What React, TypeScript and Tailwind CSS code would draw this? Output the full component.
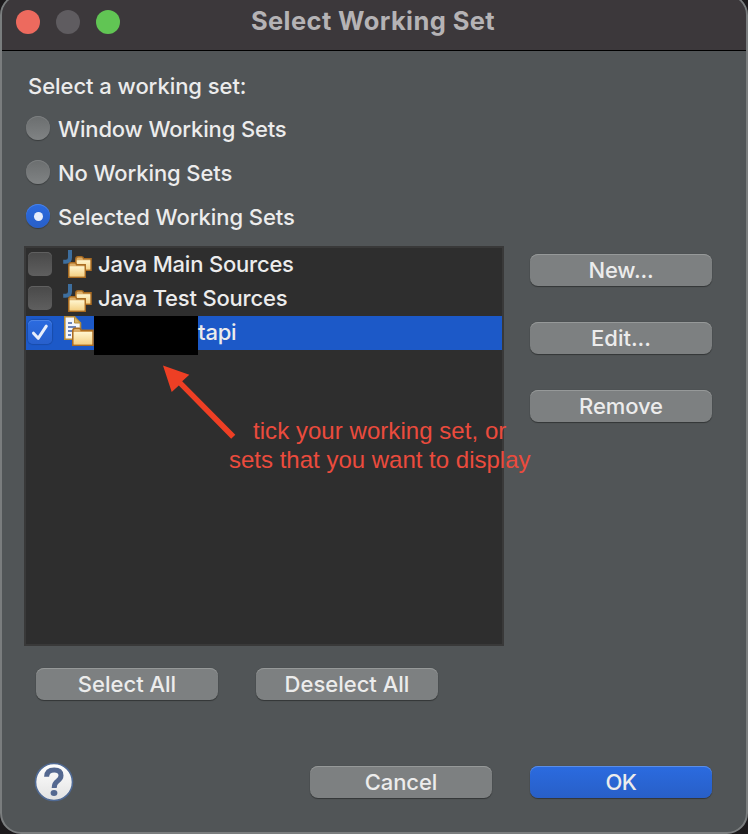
import React from "react";

const text = "font-['Inter',sans-serif] text-[22px] leading-[32px] font-[450] whitespace-nowrap text-[#ececec]";

function PushButton({ label, tracking, primary = false }: { label: string; tracking: string; primary?: boolean }) {
  return (
    <button
      className={`flex h-8 w-[182px] shrink-0 items-center justify-center rounded-[8px] ${text} ${tracking} ${
        primary
          ? "bg-linear-to-b from-[#2b6be0] to-[#285fc7] shadow-[inset_0_1px_0_#5a8ee8,0_1px_1px_rgba(0,0,0,0.35),0_0_1px_rgba(0,0,0,0.3)]"
          : "bg-[#7d8081] shadow-[inset_0_1px_0_#969999,0_1px_1px_rgba(0,0,0,0.35),0_0_1px_rgba(0,0,0,0.3)]"
      }`}
    >
      {label}
    </button>
  );
}

function Radio({ label, tracking, checked = false }: { label: string; tracking: string; checked?: boolean }) {
  return (
    <div className="flex h-11 items-center">
      <span
        className={`flex size-6 shrink-0 items-center justify-center rounded-full ${
          checked
            ? "bg-linear-to-b from-[#2b6be0] to-[#285fc7] shadow-[inset_0_1px_0_#4b82e4,0_1px_1px_rgba(0,0,0,0.3)]"
            : "bg-linear-to-b from-[#6b6e6f] to-[#808384] shadow-[inset_0_1px_0_#7c7f80,0_1px_1px_rgba(0,0,0,0.3)]"
        }`}
      >
        {checked && <span className="size-[9px] rounded-full bg-[#e6edfb]" />}
      </span>
      <span className={`ml-2 pt-[2px] ${text} ${tracking}`}>{label}</span>
    </div>
  );
}

function Checkbox({ checked = false }: { checked?: boolean }) {
  return (
    <span
      className={`ml-[2px] flex size-6 shrink-0 items-center justify-center rounded-[5px] ${
        checked
          ? "bg-linear-to-b from-[#2b6be0] to-[#2860cc] shadow-[inset_0_1px_0_#4b82e4,0_0_1px_1px_rgba(0,0,0,0.15)]"
          : "bg-linear-to-b from-[#494949] to-[#5f5f5f] shadow-[inset_0_1px_0_#606060]"
      }`}
    >
      {checked && (
        <svg width="24" height="24" viewBox="0 0 24 24" fill="none">
          <path d="M5.5 13.2 10.2 18.3 18.3 6.2" stroke="#e9effb" strokeWidth="3" strokeLinecap="round" strokeLinejoin="round" />
        </svg>
      )}
    </span>
  );
}

function JavaSetIcon() {
  return (
    <svg className="ml-[11px] shrink-0" width="30" height="30" viewBox="0 0 30 30">
      <defs>
        <linearGradient id="folder" x1="0" y1="0" x2="0" y2="1">
          <stop offset="0" stopColor="#fff5cf" />
          <stop offset="1" stopColor="#f4d184" />
        </linearGradient>
      </defs>
      <path d="M7 1V8.5Q7 12.7 2.8 12.7H0.2" fill="none" stroke="#3d6e9e" strokeWidth="4" />
      <path d="M12.8 21.2V10Q13 7.8 15 7.8H18.5Q20.3 7.8 20.6 9.8H28V21.2Z" fill="#dcae68" stroke="#aa6c22" strokeWidth="1.5" />
      <path d="M13.8 11.3H27.2V20.4H13.8Z" fill="url(#folder)" />
      <path d="M5.8 28.2V15.6Q6 13.8 8 13.8H11.5Q13.3 13.8 13.6 15.8H22.2V28.2Z" fill="#dcae68" stroke="#aa6c22" strokeWidth="1.5" />
      <path d="M6.7 17.3H21.4V27.4H6.7Z" fill="url(#folder)" />
    </svg>
  );
}

function WorkingSetIcon() {
  return (
    <svg className="ml-[11px] shrink-0" width="31" height="32" viewBox="0 0 31 32">
      <path d="M1.8 0.8H11.5L17.5 7V23.2H1.8Z" fill="#f4f7fc" stroke="#b38b3c" strokeWidth="1.6" />
      <path d="M11.5 0.8V7H17.5Z" fill="#d8b365" stroke="#b38b3c" strokeWidth="1" />
      <path d="M5 7H9M5 11H13M5 15H10M5 19H8" stroke="#6d84b8" strokeWidth="2" />
      <path d="M9.8 29.2V14.5Q10 12.2 12 12.2H16Q17.8 12.2 18.2 14.4H30V29.2Z" fill="#dcae68" stroke="#aa6c22" strokeWidth="1.6" />
      <path d="M10.7 16H29.2V28.4H10.7Z" fill="url(#folder)" />
    </svg>
  );
}

export default function App() {
  return (
    <div className="h-[834px] w-[748px] overflow-hidden bg-[#1c1a1c]">
      <div className="relative -mt-[6px] flex h-[840px] w-[748px] flex-col overflow-hidden rounded-[21px] border-2 border-[#7a7d7e] bg-[#515557]">
        <header className="grid h-[55px] shrink-0 grid-cols-[1fr_auto_1fr] border-b border-black bg-[#3c383b] pt-[14px]">
          <div className="flex gap-4 pl-[14px]">
            <span className="size-6 rounded-full bg-[#ed6a5e]" />
            <span className="size-6 rounded-full bg-[#5f5c60]" />
            <span className="size-6 rounded-full bg-[#61c554]" />
          </div>
          <h1 className="-mt-[5px] -ml-[2px] font-['Inter',sans-serif] text-[25.5px] leading-[32px] font-bold tracking-[0.4px] whitespace-nowrap text-[#b5b3b5]">
            Select Working Set
          </h1>
        </header>

        <main className="flex grow flex-col pr-[34px] pl-[22px]">
          <p className={`mt-[19px] ml-1 ${text} tracking-[-0.05px]`}>Select a working set:</p>
          <div className="mt-[4px] ml-[2px]">
            <Radio label="Window Working Sets" tracking="tracking-[-0.15px]" />
            <Radio label="No Working Sets" tracking="tracking-[-0.1px]" />
            <Radio label="Selected Working Sets" tracking="tracking-[-0.05px]" checked />
          </div>

          <div className="mt-2 flex justify-between">
            <div className="h-[400px] w-[480px] border-2 border-[#393939] bg-[#2e2e2e]">
              <div className="flex h-[34px] items-center pb-[2px]">
                <Checkbox />
                <JavaSetIcon />
                <span className={`ml-[5px] ${text} tracking-[-0.2px]`}>Java Main Sources</span>
              </div>
              <div className="flex h-[34px] items-center pb-[2px]">
                <Checkbox />
                <JavaSetIcon />
                <span className={`ml-[5px] ${text} tracking-[-0.2px]`}>Java Test Sources</span>
              </div>
              <div className="flex h-[34px] items-center bg-[#1c59c8] pb-[2px]">
                <Checkbox checked />
                <WorkingSetIcon />
                <span className="-mb-[7px] h-[39px] w-[104px] shrink-0 bg-black" />
                <span className={`${text} tracking-[-0.2px]`}>tapi</span>
              </div>
            </div>
            <div className="flex flex-col gap-9 pt-2">
              <PushButton label="New..." tracking="tracking-[-0.1px]" />
              <PushButton label="Edit..." tracking="tracking-[0px]" />
              <PushButton label="Remove" tracking="tracking-[-0.1px]" />
            </div>
          </div>

          <div className="mt-[22px] ml-3 flex gap-[38px]">
            <PushButton label="Select All" tracking="tracking-[0px]" />
            <PushButton label="Deselect All" tracking="tracking-[0px]" />
          </div>

          <footer className="mt-[62px] flex h-10 items-center pl-[10px]">
            <svg className="shrink-0" width="40" height="40" viewBox="0 0 40 40">
              <defs>
                <linearGradient id="help" x1="0" y1="0" x2="0" y2="1">
                  <stop offset="0" stopColor="#ffffff" />
                  <stop offset="1" stopColor="#e2e2e2" />
                </linearGradient>
              </defs>
              <circle cx="20" cy="20" r="18.5" fill="url(#help)" stroke="#506a94" strokeWidth="1.6" />
              <path d="M12.6 14.8Q12.8 8 20.2 8Q27 8 27 13.5Q27 16.5 23.6 19Q20.2 21.3 20.2 26" fill="none" stroke="#546890" strokeWidth="5" />
              <ellipse cx="20" cy="31" rx="3.4" ry="2.9" fill="#546890" />
            </svg>
            <div className="ml-[236px] flex gap-[38px]">
              <PushButton label="Cancel" tracking="tracking-[-0.1px]" />
              <PushButton label="OK" tracking="tracking-[-0.4px]" primary />
            </div>
          </footer>
        </main>

        <svg className="absolute top-[365px] left-[156px]" width="84" height="84" viewBox="0 0 84 84">
          <path d="M5 4.5 31.3 13.7 24.2 20.3 77.3 73.7 73.2 77.8 20.8 24.4 13.7 31Z" fill="#ee3f24" />
        </svg>
        <p className="absolute top-[420px] left-[227px] font-['Liberation_Sans',sans-serif] text-[24px] leading-[29px] tracking-[0px] whitespace-pre text-[#eb4b3d]">
          <span className="block pl-6 tracking-[0.05px]">tick your working set, or</span>
          <span className="block">sets that you want to display</span>
        </p>
      </div>
    </div>
  );
}
